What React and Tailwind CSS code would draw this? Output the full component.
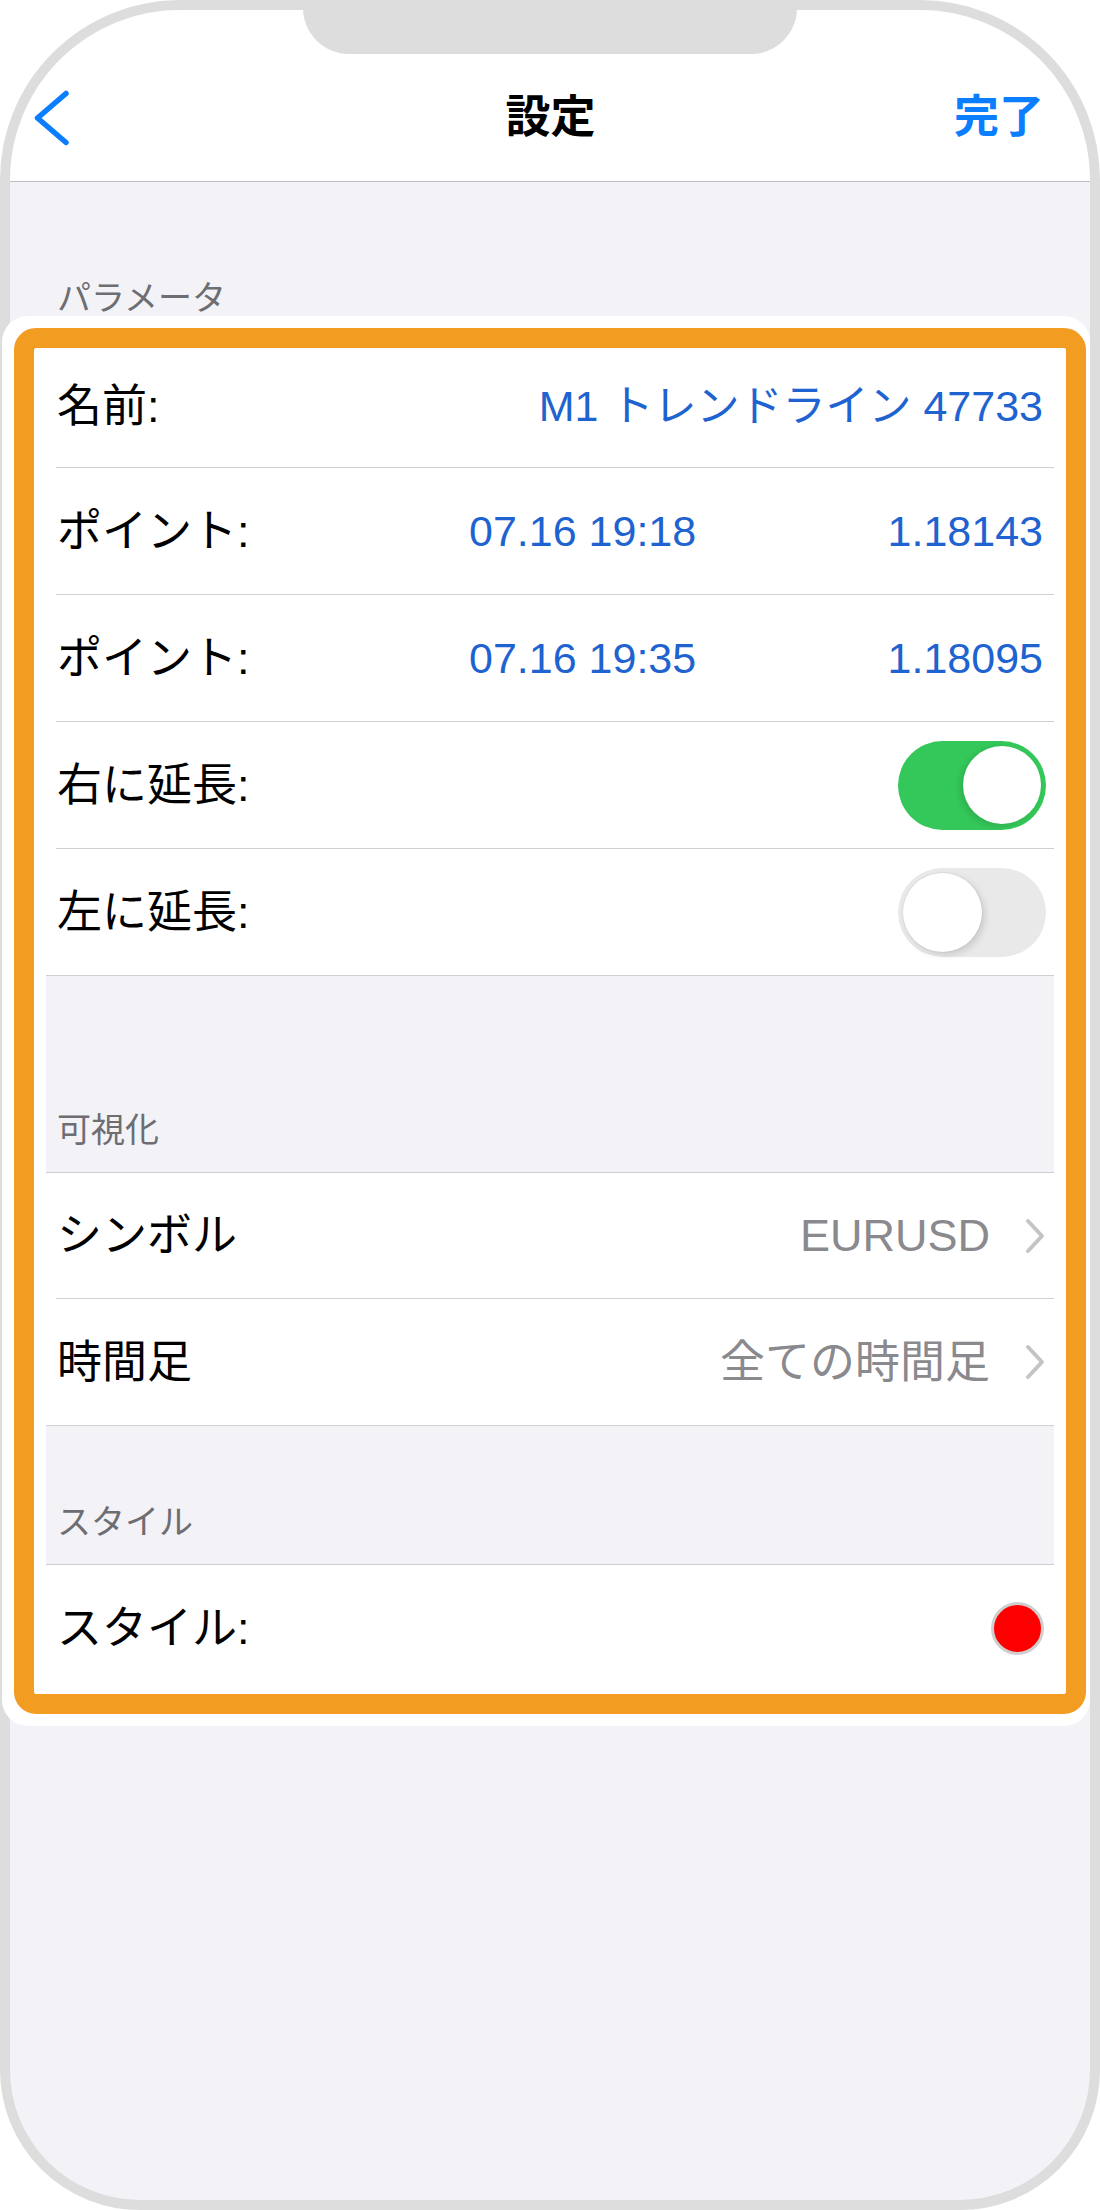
import React from "react";

function ChevronRight() {
  return (
    <svg width="22" height="36" viewBox="0 0 22 36" fill="none" className="-mr-[3px]">
      <path d="M4 3 L18 18 L4 33" stroke="#c4c4c7" strokeWidth="4" strokeLinecap="round" strokeLinejoin="round" />
    </svg>
  );
}

function Toggle({ on }) {
  if (on) {
    return (
      <div className="w-[148px] h-[89px] rounded-full bg-[#34c759] flex items-center justify-end px-[5px] -mr-[3px]">
        <div className="w-[78px] h-[78px] rounded-full bg-white shadow-[-3px_2px_6px_rgba(0,0,0,0.12)]" />
      </div>
    );
  }
  return (
    <div className="w-[148px] h-[89px] rounded-full bg-[#e9e9ea] flex items-center justify-start px-[5px] -mr-[3px]">
      <div className="w-[79px] h-[79px] rounded-full bg-white shadow-[3px_3px_7px_rgba(0,0,0,0.13),0_0_0_1px_rgba(0,0,0,0.04)]" />
    </div>
  );
}

function Row({ h = "h-[127px]", border = true, children }) {
  return (
    <div
      className={
        "ml-[10px] flex items-center pl-[1px] pr-[11px] " +
        h +
        (border ? " border-b border-[#d0d0d4]" : "")
      }
    >
      {children}
    </div>
  );
}

function SectionHeader({ h, children }) {
  return (
    <div
      className={
        "bg-[#f2f2f7] border-y border-[#d0d0d4] flex items-end pl-[11px] pb-[25px] text-[34px] leading-[34px] text-[#6d6d72] " +
        h
      }
    >
      {children}
    </div>
  );
}

export default function App() {
  return (
    <div className="w-[1100px] h-[2210px] bg-white font-['Liberation_Sans','Noto_Sans_CJK_JP',sans-serif] text-black">
      <div className="relative w-[1100px] h-[2210px] rounded-t-[180px] rounded-b-[140px] border-[10px] border-[#dddddd] bg-[#f2f2f7]">
        {/* notch */}
        <div className="absolute left-[293px] -top-[10px] w-[494px] h-[54px] rounded-b-[46px] bg-[#dddddd] z-10" />

        {/* nav bar */}
        <div className="h-[172px] rounded-t-[170px] bg-white border-b border-[#bfbfc3] grid grid-cols-[1fr_auto_1fr] items-center pt-[44px] pl-[47px] pr-[46px]">
          <div className="flex items-center -ml-[24px]">
            <svg width="40" height="60" viewBox="0 0 40 60" fill="none">
              <path d="M33 5.5 L4.5 30 L33 54.5" stroke="#0b7dff" strokeWidth="5.5" strokeLinecap="round" strokeLinejoin="round" />
            </svg>
          </div>
          <div className="text-[45px] leading-none font-bold">設定</div>
          <div className="justify-self-end text-[45px] leading-none font-bold text-[#0b7dff]">完了</div>
        </div>

        {/* section header */}
        <div className="h-[134px] pl-[47px] pt-[99px] text-[34px] leading-[34px] text-[#6d6d72]">パラメータ</div>

        {/* highlighted group */}
        <div className="-ml-[8px] w-[1088px] bg-white rounded-[26px] pl-[12px] pr-[4px] py-[12px]">
          <div className="border-[20px] border-[#f39c22] rounded-[22px] bg-white">
            <div className="mx-[12px] text-[45px] leading-none">
              <Row h="h-[120px] pb-[3px]">
                <span>名前:</span>
                <span className="ml-auto text-[#1e63d0] text-[43px] whitespace-nowrap">
                  M1 トレンドライン 47733
                </span>
              </Row>
              <Row>
                <span className="w-[412px] shrink-0">ポイント:</span>
                <span className="text-[#1e63d0] text-[43px]">07.16 19:18</span>
                <span className="ml-auto text-[#1e63d0] text-[43px]">1.18143</span>
              </Row>
              <Row>
                <span className="w-[412px] shrink-0">ポイント:</span>
                <span className="text-[#1e63d0] text-[43px]">07.16 19:35</span>
                <span className="ml-auto text-[#1e63d0] text-[43px]">1.18095</span>
              </Row>
              <Row>
                <span>右に延長:</span>
                <div className="ml-auto">
                  <Toggle on />
                </div>
              </Row>
              <Row h="h-[126px]" border={false}>
                <span>左に延長:</span>
                <div className="ml-auto">
                  <Toggle on={false} />
                </div>
              </Row>

              <SectionHeader h="h-[198px]">可視化</SectionHeader>

              <Row h="h-[126px]">
                <span>シンボル</span>
                <div className="ml-auto flex items-center gap-[34px] text-[#8a8a8e]">
                  <span>EURUSD</span>
                  <ChevronRight />
                </div>
              </Row>
              <Row h="h-[126px]" border={false}>
                <span>時間足</span>
                <div className="ml-auto flex items-center gap-[34px] text-[#8a8a8e]">
                  <span>全ての時間足</span>
                  <ChevronRight />
                </div>
              </Row>

              <SectionHeader h="h-[140px]">スタイル</SectionHeader>

              <Row h="h-[129px] pb-[2px]" border={false}>
                <span>スタイル:</span>
                <div className="ml-auto w-[53px] h-[53px] rounded-full bg-[#ff0000] border-[3px] border-[#cfcfcf] -mr-[1px]" />
              </Row>
            </div>
          </div>
        </div>
      </div>
    </div>
  );
}
